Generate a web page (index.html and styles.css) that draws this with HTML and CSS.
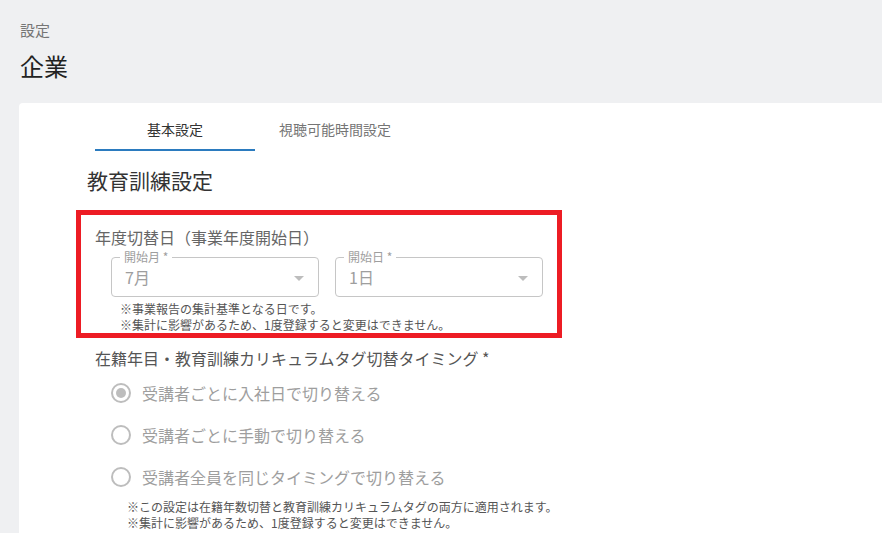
FILE: index.html
```html
<!DOCTYPE html>
<html lang="ja">
    <head>
        <meta charset="utf-8" />
        <title>企業設定</title>
        <link rel="stylesheet" href="styles.css">
    </head>
    <body>
        <div class="page">
            <div class="breadcrumb">設定</div>
            <h1 class="title">企業</h1>
            <div class="card">
                <div class="tabs">
                    <div class="tab active">基本設定</div>
                    <div class="tab">視聴可能時間設定</div>
                </div>
                <h2 class="section-title">教育訓練設定</h2>
                <div class="highlight">
                    <div class="field-label">年度切替日（事業年度開始日）</div>
                    <div class="select-row">
                        <div class="select">
                            <span class="legend">開始月 *</span>
                            <span class="value">7月</span>
                            <span class="arrow"></span>
                        </div>
                        <div class="select">
                            <span class="legend">開始日 *</span>
                            <span class="value">1日</span>
                            <span class="arrow"></span>
                        </div>
                    </div>
                    <p class="help help-date">※事業報告の集計基準となる日です。<br>※集計に影響があるため、1度登録すると変更はできません。</p>
                </div>
                <div class="radio-group">
                    <div class="field-label dark">在籍年目・教育訓練カリキュラムタグ切替タイミング *</div>
                    <label class="radio checked"><span class="circle"></span>受講者ごとに入社日で切り替える</label>
                    <label class="radio"><span class="circle"></span>受講者ごとに手動で切り替える</label>
                    <label class="radio"><span class="circle"></span>受講者全員を同じタイミングで切り替える</label>
                    <p class="help help-radio">※この設定は在籍年数切替と教育訓練カリキュラムタグの両方に適用されます。<br>※集計に影響があるため、1度登録すると変更はできません。</p>
                </div>
            </div>
        </div>
    </body>
</html>
```

FILE: styles.css
```css
* {
    margin: 0;
    padding: 0;
    box-sizing: border-box;
}
body {
    background-color: #eff0f2;
    color: #333;
    font-family: "Noto Sans CJK JP", "Noto Sans", sans-serif;
}
.page {
    padding: 19px 0 0 19px;
}
.breadcrumb {
    font-size: 15px;
    line-height: 22px;
    color: #757575;
    padding-left: 1px;
}
.title {
    margin-top: 9px;
    font-size: 24px;
    line-height: 32px;
    font-weight: 400;
    color: #222;
    padding-left: 1px;
}
.card {
    margin-top: 21px;
    background-color: #fff;
    border-radius: 4px 0 0 0;
    height: 440px;
}
/* tabs */
.tabs {
    display: flex;
    padding-left: 76px;
}
.tab {
    width: 160px;
    height: 48px;
    padding-top: 6px;
    display: flex;
    justify-content: center;
    align-items: center;
    font-size: 14px;
    color: #757575;
    border-bottom: 2px solid transparent;
}
.tab.active {
    color: #333;
    border-bottom-color: #2b7bbf;
}
.section-title {
    margin-top: 14px;
    padding-left: 68px;
    font-size: 21px;
    line-height: 30px;
    font-weight: 400;
    color: #333;
}
/* red box */
.highlight {
    margin-top: 15px;
    margin-left: 57px;
    width: 486px;
    border: 5px solid #ed1c24;
    padding: 10px 0 0 14px;
}
.field-label {
    font-size: 16px;
    line-height: 24px;
    color: #666;
}
.field-label.dark {
    color: #555;
    margin-bottom: 2px;
}
.select-row {
    display: flex;
    gap: 16px;
    margin-top: 8px;
    margin-left: 16px;
}
.select {
    position: relative;
    width: 208px;
    height: 40px;
    border: 1px solid #c6c6c6;
    border-radius: 4px;
    display: flex;
    align-items: center;
    padding-left: 13px;
}
.legend {
    position: absolute;
    top: -9px;
    left: 8px;
    padding: 0 4px;
    background-color: #fff;
    font-size: 12px;
    line-height: 16px;
    color: #9e9e9e;
}
.value {
    font-size: 16px;
    color: #9e9e9e;
}
.arrow {
    position: absolute;
    right: 14px;
    top: 18px;
    border-left: 5px solid transparent;
    border-right: 5px solid transparent;
    border-top: 5px solid #bdbdbd;
}
.help {
    font-size: 12px;
    line-height: 16px;
    color: #555;
}
.help-date {
    margin-top: 4px;
    margin-left: 25px;
}
/* radios */
.radio-group {
    margin-top: 8px;
    padding-left: 76px;
}
.radio {
    display: flex;
    align-items: center;
    height: 42px;
    padding-left: 16px;
    font-size: 16px;
    color: #9e9e9e;
}
.circle {
    width: 20px;
    height: 20px;
    border: 2px solid #bdbdbd;
    border-radius: 50%;
    margin-right: 11px;
    display: flex;
    justify-content: center;
    align-items: center;
}
.radio.checked .circle::after {
    content: "";
    width: 10px;
    height: 10px;
    border-radius: 50%;
    background-color: #bdbdbd;
}
.help-radio {
    margin-top: 1px;
    margin-left: 32px;
}
```
